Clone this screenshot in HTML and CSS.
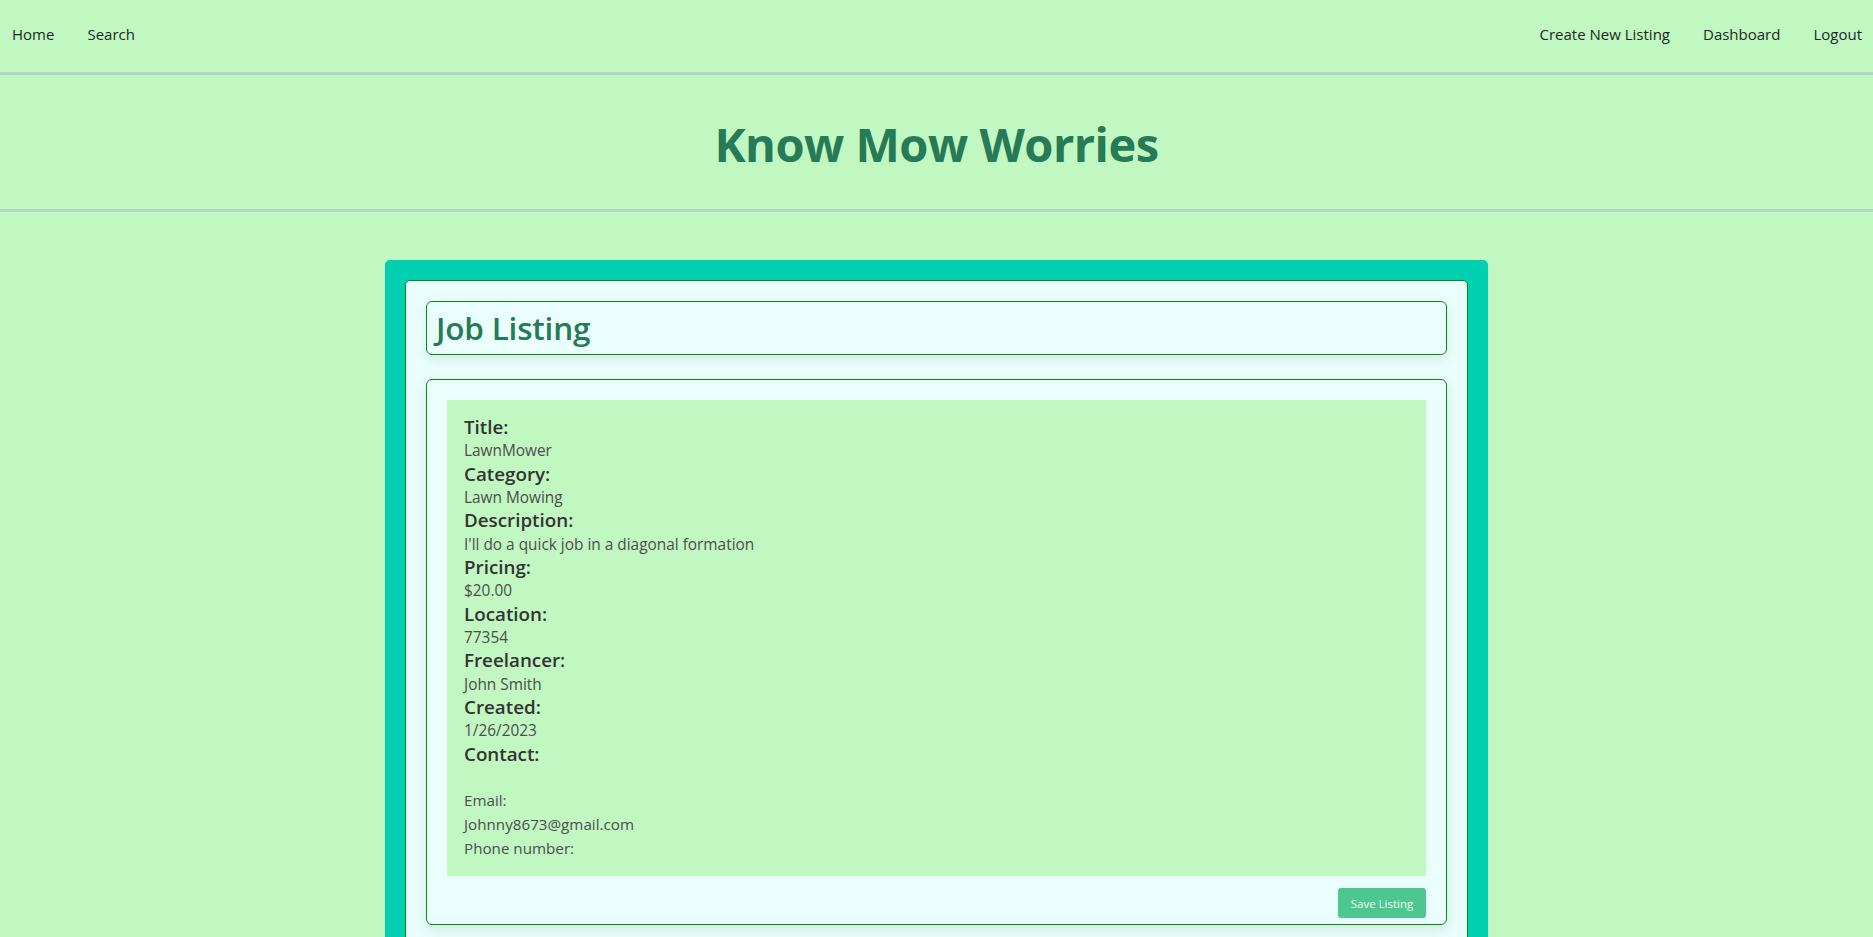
FILE: index.html
```html
<!DOCTYPE html>
<html lang="en">
<head>
<meta charset="utf-8">
<title>Know Mow Worries</title>
<link rel="stylesheet" href="styles.css">
</head>
<body>
<nav class="navbar">
  <div class="nav-group">
    <a class="nav-link" href="#">Home</a>
    <a class="nav-link" href="#">Search</a>
  </div>
  <div class="nav-group">
    <a class="nav-link" href="#">Create New Listing</a>
    <a class="nav-link" href="#">Dashboard</a>
    <a class="nav-link" href="#">Logout</a>
  </div>
</nav>
<header class="site-header">
  <h1 class="site-title">Know Mow Worries</h1>
</header>
<main class="main">
  <section class="outer-card">
    <div class="inner-card">
      <div class="head-box">
        <h2 class="head-title">Job Listing</h2>
      </div>
      <div class="detail-box">
        <div class="detail-area">
          <div class="label">Title:</div>
          <div class="value">LawnMower</div>
          <div class="label">Category:</div>
          <div class="value">Lawn Mowing</div>
          <div class="label">Description:</div>
          <div class="value">I'll do a quick job in a diagonal formation</div>
          <div class="label">Pricing:</div>
          <div class="value">$20.00</div>
          <div class="label">Location:</div>
          <div class="value">77354</div>
          <div class="label">Freelancer:</div>
          <div class="value">John Smith</div>
          <div class="label">Created:</div>
          <div class="value">1/26/2023</div>
          <div class="label">Contact:</div>
          <div class="contact">
            <div class="contact-line">Email:</div>
            <div class="contact-line">Johnny8673@gmail.com</div>
            <div class="contact-line">Phone number:</div>
          </div>
        </div>
        <div class="actions">
          <button class="save-btn" type="button">Save Listing</button>
        </div>
      </div>
    </div>
  </section>
</main>
</body>
</html>
```

FILE: styles.css
```css
* { box-sizing: border-box; }

html, body {
  margin: 0;
  padding: 0;
}

body {
  background: #c1f7c1;
  font-family: "Open Sans", "Noto Sans", sans-serif;
  color: #333333;
  overflow: hidden;
}

.navbar {
  height: 75px;
  display: flex;
  justify-content: space-between;
  align-items: flex-start;
  border-bottom: 3px solid #b2d6c4;
}

.nav-group {
  display: flex;
  align-items: center;
  height: 67px;
}

.nav-link {
  font-size: 15px;
  color: #1b2a1e;
  text-decoration: none;
  padding: 0 12px;
  margin-right: 9px;
}
.nav-group:last-child .nav-link:last-child { margin-right: 0; padding-right: 11px; }

.site-header {
  height: 137px;
  display: flex;
  align-items: center;
  justify-content: center;
  border-bottom: 3px solid #b2d6c4;
}

.site-title {
  margin: 0;
  font-size: 47px;
  font-weight: 700;
  color: #267a55;
  letter-spacing: -0.5px;
  padding-top: 3px;
}

.main {
  display: flex;
  justify-content: center;
  padding-top: 48px;
}

.outer-card {
  width: 1103px;
  background: #00cfb0;
  border-radius: 5px;
  padding: 20px 20px 0 20px;
  height: 700px;
}

.inner-card {
  background: #eafffd;
  border: 1px solid #0a8a0a;
  border-radius: 5px;
  padding: 20px;
  height: 100%;
}

.head-box {
  border: 1px solid #0a8a0a;
  border-radius: 6px;
  padding: 7px 8px 7px 9px;
  box-shadow: 0 5px 12px rgba(60, 110, 90, 0.14);
  height: 54px;
}

.head-title {
  margin: 0;
  font-size: 31.5px;
  font-weight: 600;
  color: #267a55;
  line-height: 38px;
  letter-spacing: -0.2px;
}

.detail-box {
  margin-top: 24px;
  border: 1px solid #0a8a0a;
  border-radius: 6px;
  padding: 20px 20px 6px 20px;
  box-shadow: 0 5px 14px rgba(60, 110, 90, 0.16);
}

.detail-area {
  background: #c1f7c1;
  padding: 16px 16px 16px 17px;
  height: 476px;
}

.label {
  font-size: 18.8px;
  font-weight: 600;
  color: #333333;
  line-height: 23.33px;
}

.value {
  font-size: 15.4px;
  color: #4d4d4d;
  line-height: 23.33px;
}

.contact {
  padding-top: 22px;
}

.contact-line {
  font-size: 15.2px;
  color: #4d4d4d;
  line-height: 24px;
}

.actions {
  display: flex;
  justify-content: flex-end;
  padding-top: 12px;
}

.save-btn {
  width: 88px;
  height: 30px;
  border: none;
  border-radius: 3px;
  background: #4dc78f;
  color: #f0fff8;
  font-family: "Open Sans", "Noto Sans", sans-serif;
  font-size: 11.5px;
  padding: 0;
  cursor: pointer;
}
```
